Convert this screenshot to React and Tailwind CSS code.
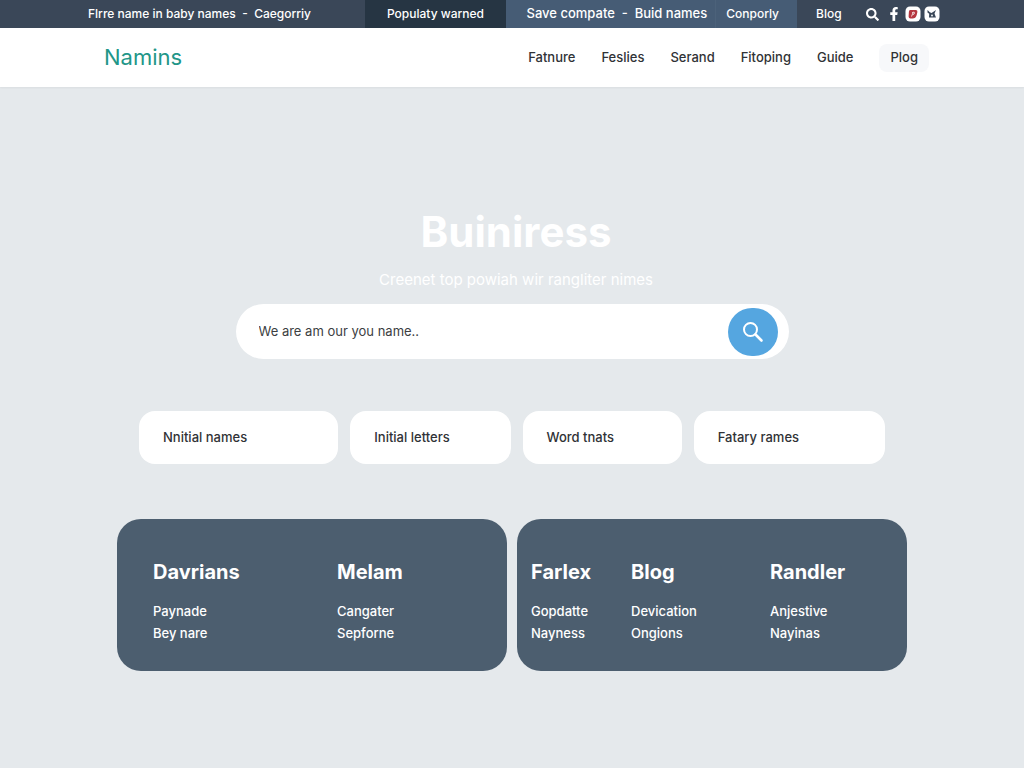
import { FaFacebookF, FaSearch } from 'react-icons/fa';

const navLinks = ['Fatnure', 'Feslies', 'Serand', 'Fitoping', 'Guide'];

const filters = ['Nnitial names', 'Initial letters', 'Word tnats', 'Fatary rames'];

const leftColumns = [
  { title: 'Davrians', links: ['Paynade', 'Bey nare'] },
  { title: 'Melam', links: ['Cangater', 'Sepforne'] },
];

const rightColumns = [
  { title: 'Farlex', links: ['Gopdatte', 'Nayness'] },
  { title: 'Blog', links: ['Devication', 'Ongions'] },
  { title: 'Randler', links: ['Anjestive', 'Nayinas'] },
];

function TopBar() {
  return (
    <div className="grid h-7 grid-cols-[365fr_141fr_291fr_227fr] bg-[#3a4758] text-xs font-medium whitespace-nowrap text-white">
      <div className="flex items-center justify-end pr-[54px]">
        <a href="#category">Flrre name in baby names &nbsp;-&nbsp; Caegorriy</a>
      </div>
      <div className="flex items-center justify-center bg-[#263543]">
        <a href="#popular">Populaty warned</a>
      </div>
      <div className="flex bg-[#465c75]">
        <a href="#save" className="flex flex-1 items-center justify-end border-r border-[#4c627a] pr-2 text-[13px]">Save compate &nbsp;-&nbsp; Buid names</a>
        <a href="#company" className="flex items-center pr-[18px] pl-[10px]">Conporly</a>
      </div>
      <div className="flex items-center pl-[19px]">
        <a href="#blog">Blog</a>
        <button type="button" aria-label="Search" className="ml-6">
          <FaSearch size={13} />
        </button>
        <a href="#facebook" aria-label="Facebook" className="ml-2">
          <FaFacebookF size={14} />
        </a>
        <a href="#pinterest" aria-label="Pinterest" className="ml-1">
          <svg width="16" height="16" viewBox="0 0 16 16">
            <rect x="0.5" y="0.5" width="15" height="15" rx="4.5" fill="#fff" />
            <path d="M5 4h5.500Q12.700 3.800 12.400 6L11.700 9Q10.700 12.500 7.500 12.500H5.500Q3.500 12.500 3.600 10.500L3.900 5.700Q4.100 4 5 4Z" fill="#b5363f" />
            <path d="M6.500 10.500L8 6.800M7 7Q8 5.800 9.300 6.300Q10 8 8 8.600" fill="none" stroke="#fff" strokeWidth="0.8" />
          </svg>
        </a>
        <a href="#share" aria-label="Share" className="ml-[3px]">
          <svg width="16" height="16" viewBox="0 0 16 16">
            <rect x="0.5" y="0.5" width="15" height="15" rx="4.5" fill="#fff" />
            <path d="M3.500 4L5.800 6.300L7.500 7L12 4L10.500 7.500L11 9L12 11.500H5L5.200 7.800L3.500 6.500Z" fill="#3a4758" />
            <circle cx="8" cy="9.500" r="0.9" fill="#fff" />
          </svg>
        </a>
      </div>
    </div>
  );
}

function Header() {
  return (
    <header className="flex h-[59px] items-center justify-between bg-white pr-[95px] pl-[104px] shadow-xs">
      <a href="#home" className="text-[22px] text-[#229688]">Namins</a>
      <nav className="flex items-center gap-[26px] text-[13px] font-medium text-[#303236]">
        {navLinks.map((link) => (
          <a key={link} href="#nav">{link}</a>
        ))}
        <button type="button" className="h-7 rounded-lg bg-[#f7f8fa] px-[11px]">Plog</button>
      </nav>
    </header>
  );
}

function Column({ title, links }) {
  return (
    <div>
      <h2 className="text-xl leading-7 font-bold">{title}</h2>
      <ul className="mt-[14px] text-[13px] leading-[22px] font-medium">
        {links.map((link) => (
          <li key={link}>
            <a href="#names">{link}</a>
          </li>
        ))}
      </ul>
    </div>
  );
}

export default function App() {
  return (
    <div className="min-h-screen bg-[#e5e9ec] font-['Inter',sans-serif]">
      <TopBar />
      <Header />

      <main className="px-[117px] pt-[117px] pb-24">
        <div className="pl-2 text-center text-white">
          <h1 className="text-[42px] leading-[56px] font-bold">Buiniress</h1>
          <p className="mt-2 text-[15px] leading-6">Creenet top powiah wir rangliter nimes</p>
        </div>

        <form className="mx-auto mt-3 flex h-[55px] max-w-[553px] items-center rounded-full bg-white pr-[11px] pl-[23px]">
          <input
            type="text"
            aria-label="Name search"
            placeholder="We are am our you name.."
            className="min-w-0 flex-1 text-[13px] text-[#303236] outline-none placeholder:text-[#3c3e42]"
          />
          <button type="submit" aria-label="Search" className="flex h-12 w-[50px] items-center justify-center rounded-full bg-[#55a6e0] text-white">
            <svg width="22" height="22" viewBox="0 0 22 22" fill="none" stroke="currentColor" strokeLinecap="round">
              <circle cx="8.5" cy="8.5" r="6.5" strokeWidth="2" />
              <path d="M13.500 13.500L19.500 19.500" strokeWidth="2.6" />
            </svg>
          </button>
        </form>

        <div className="mx-[22px] mt-[52px] grid grid-cols-[199fr_160fr_159fr_191fr] gap-3 text-[13px] font-medium text-[#303236]">
          {filters.map((label) => (
            <button key={label} type="button" className="h-[53px] rounded-2xl bg-white px-6 text-left">
              {label}
            </button>
          ))}
        </div>

        <div className="mt-[55px] grid grid-cols-2 gap-[10px] text-white">
          <section className="grid grid-cols-[184fr_134fr] rounded-3xl bg-[#4c5e6f] px-9 pt-[39px] pb-[27px]">
            {leftColumns.map((col) => (
              <Column key={col.title} {...col} />
            ))}
          </section>
          <section className="grid grid-cols-[100fr_139fr_123fr] rounded-3xl bg-[#4c5e6f] px-[14px] pt-[39px] pb-[27px]">
            {rightColumns.map((col) => (
              <Column key={col.title} {...col} />
            ))}
          </section>
        </div>
      </main>
    </div>
  );
}
